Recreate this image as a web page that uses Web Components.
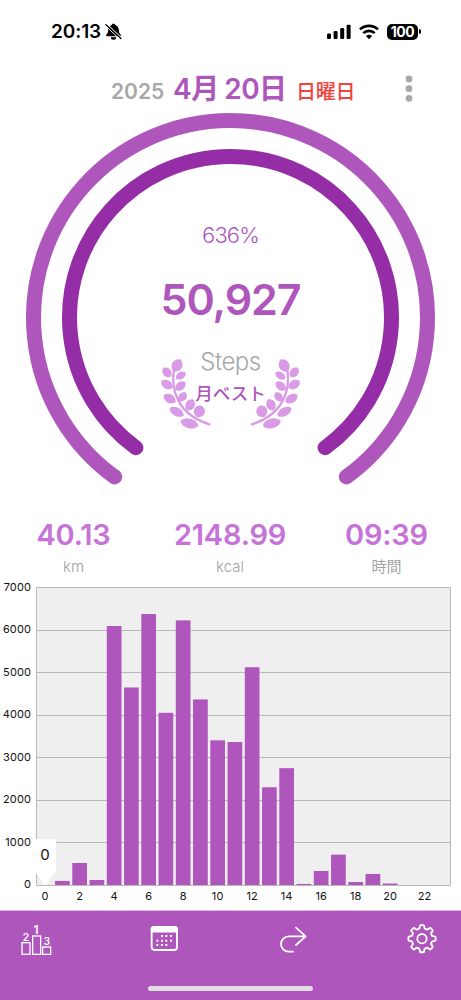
<!DOCTYPE html>
<html lang="ja">
<head>
<meta charset="utf-8">
<title>Steps</title>
<style>
  body {
    margin: 0;
    background: #fff;
    font-family: Inter, "Noto Sans CJK JP", sans-serif;
    --main: #ae56bc;
    --dark: #952da6;
    --light: #c672d8;
    --gray: #a8a8a8;
  }
</style>
</head>
<body>
<step-app></step-app>

<template id="step-app">
  <style>
    :host { display: flex; flex-direction: column; width: 461px; height: 1000px; overflow: hidden; }
    .stats { display: flex; height: 88px; margin-top: 1px; }
    .stats stat-item { flex: 0 0 auto; }
  </style>
  <status-bar time="20:13" battery="100"></status-bar>
  <date-header>
    <span slot="year">2025</span>
    <span slot="date">4月 20日</span>
    <span slot="weekday">日曜日</span>
  </date-header>
  <step-gauge>
    <span slot="percent">636%</span>
    <span slot="steps">50,927</span>
    <span slot="unit">Steps</span>
    <laurel-badge slot="badge">月ベスト</laurel-badge>
  </step-gauge>
  <div class="stats">
    <stat-item style="width:147px" value="40.13">km</stat-item>
    <stat-item style="width:166px" value="2148.99">kcal</stat-item>
    <stat-item style="width:147px" value="09:39">時間</stat-item>
  </div>
  <bar-chart max="7000" selected="0"
    values="[0,95,518,118,6094,4648,6376,4052,6226,4366,3404,3364,5124,2300,2749,25,330,714,70,260,35,0,0,0]"></bar-chart>
  <tab-bar></tab-bar>
</template>

<template id="status-bar">
  <style>
    :host { display: flex; align-items: center; height: 62px; padding: 1px 40px 0 51px; box-sizing: border-box; color: #000; }
    .time { font-size: 19px; font-weight: 600; letter-spacing: -0.1px; line-height: 24px; }
    .bell { margin-left: 4px; }
    .right { display: flex; align-items: center; gap: 8px; margin-left: auto; }
    .battery { display: flex; align-items: center; gap: 1px; }
    .level {
      width: 31px; height: 16px; border-radius: 5px; background: #000; color: #fff;
      font-size: 14px; font-weight: 700; line-height: 16px; text-align: center; letter-spacing: -0.5px;
    }
    .nub { width: 2px; height: 5px; border-radius: 0 2px 2px 0; background: #000; }
  </style>
  <span class="time"></span>
  <svg class="bell" width="17" height="18" viewBox="0 0 17 18">
    <path d="M8.500 0.700c1.200 0 1.900.6 2.100 1.500 2.300.9 3.200 2.700 3.300 5.200.1 2.200.7 3.100 1.700 4 .5.5.4 1.800-.5 1.800H1.900c-.9 0-1-1.300-.5-1.800 1-.9 1.600-1.800 1.700-4 .1-2.500 1-4.300 3.300-5.200.2-.9.9-1.500 2.100-1.500z"/>
    <path d="M5.800 14.300h5.400a2.700 2.500 0 0 1-5.400 0z"/>
    <path d="M1.200 0.700 16.800 15" stroke="#fff" stroke-width="1.100"/>
    <path d="M0.900 1.700 15.900 15.600" stroke="#000" stroke-width="1.300" stroke-linecap="round"/>
    <path d="M0.300 2.700 14.900 16.300" stroke="#fff" stroke-width="0.900"/>
  </svg>
  <div class="right">
    <svg width="24" height="16" viewBox="0 0 24 16">
      <rect x="0" y="9.500" width="4" height="5.500" rx="1.200"/>
      <rect x="6.600" y="7" width="4" height="8" rx="1.200"/>
      <rect x="13.200" y="4" width="4" height="11" rx="1.200"/>
      <rect x="19.600" y="0.800" width="4" height="14.200" rx="1.200"/>
    </svg>
    <svg width="20" height="16" viewBox="0 0 20 16" fill="none" stroke="#000" stroke-width="2.700">
      <path d="M1 5.400a13 13 0 0 1 18 0"/>
      <path d="M4.300 9.100a8.200 8.200 0 0 1 11.400 0"/>
      <path d="M10 15.200 6.900 12.100a4.500 4.500 0 0 1 6.200 0z" fill="#000" stroke="none"/>
    </svg>
    <div class="battery"><div class="level"></div><div class="nub"></div></div>
  </div>
</template>

<template id="date-header">
  <style>
    :host { display: flex; align-items: baseline; height: 50px; padding: 9px 0 0 111px; box-sizing: border-box; white-space: nowrap; line-height: 36px; }
    .year { width: 62px; color: var(--gray); font-size: 21px; font-weight: 600; }
    .date { width: 123px; color: var(--main); font-size: 28px; font-weight: 600; letter-spacing: -0.5px; word-spacing: -1px; }
    .weekday { width: 109px; color: #f0443c; font-size: 20px; font-weight: 500; letter-spacing: -0.3px; }
    svg { align-self: flex-start; margin-top: 4px; fill: var(--gray); }
  </style>
  <div class="year"><slot name="year"></slot></div>
  <div class="date"><slot name="date"></slot></div>
  <div class="weekday"><slot name="weekday"></slot></div>
  <svg width="8" height="28" viewBox="0 0 8 28">
    <circle cx="4" cy="4" r="3.400"/><circle cx="4" cy="13.700" r="3.400"/><circle cx="4" cy="23.300" r="3.400"/>
  </svg>
</template>

<template id="step-gauge">
  <style>
    /* arcs and labels share a single grid cell */
    :host { display: grid; height: 400px; }
    svg, .labels { grid-area: 1 / 1; }
    .labels { display: flex; flex-direction: column; align-items: center; white-space: nowrap; }
    .percent { margin-top: 109px; height: 28px; line-height: 28px; font-size: 22px; font-weight: 350; color: var(--main); letter-spacing: -0.9px; }
    .steps { margin-top: 22px; height: 56px; line-height: 56px; font-size: 43px; font-weight: 600; color: var(--main); letter-spacing: -1.1px; }
    .unit { margin-top: 20px; height: 30px; line-height: 30px; font-size: 24px; font-weight: 350; color: var(--gray); letter-spacing: -0.5px; }
    .badge { margin-top: -18px; }
  </style>
  <svg width="461" height="400" viewBox="0 112 461 400" fill="none" stroke-width="15" stroke-linecap="round">
    <path d="M114.700 476.900A197 197 0 1 1 346.300 476.900" stroke="var(--main)"/>
    <path d="M135.900 447.700A161 161 0 1 1 325.100 447.700" stroke="var(--dark)"/>
  </svg>
  <div class="labels">
    <div class="percent"><slot name="percent"></slot></div>
    <div class="steps"><slot name="steps"></slot></div>
    <div class="unit"><slot name="unit"></slot></div>
    <div class="badge"><slot name="badge"></slot></div>
  </div>
</template>

<template id="laurel-badge">
  <style>
    :host { display: grid; width: 140px; height: 70px; }
    svg, .text { grid-area: 1 / 1; }
    .text { padding-top: 23px; line-height: 24px; text-align: center; font-size: 17.5px; font-weight: 500; color: var(--main); }
  </style>
  <svg width="140" height="70" viewBox="63 448 420 210" fill="#d99ae6"></svg>
  <div class="text"><slot></slot></div>
</template>

<template id="stat-item">
  <style>
    :host { display: flex; flex-direction: column; align-items: center; }
    .value { margin-top: 4px; height: 36px; line-height: 36px; font-size: 29px; font-weight: 600; color: var(--light); letter-spacing: -0.2px; }
    .label { margin-top: 4px; height: 20px; line-height: 20px; font-size: 15px; font-weight: 350; color: #a0a0a0; }
  </style>
  <div class="value"></div>
  <div class="label"><slot></slot></div>
</template>

<template id="bar-chart">
  <style>
    :host { display: block; height: 330px; margin-top: -21px; }
    svg { display: block; }
    text { font-size: 11px; fill: #111; letter-spacing: 0.1px; }
    .y { text-anchor: end; }
    .x { text-anchor: middle; }
    .tip { font-size: 15px; text-anchor: middle; }
  </style>
  <svg width="461" height="330" viewBox="0 580 461 330"></svg>
</template>

<template id="tab-bar">
  <style>
    :host { display: flex; flex-direction: column; align-items: center; height: 90px; flex: none; background: var(--main); border-top: 1px solid #dfbde5; box-sizing: border-box; }
    nav { display: flex; justify-content: space-between; width: 100%; box-sizing: border-box; padding: 13px 23px 0 20px; height: 75px; }
    svg { width: 32px; height: 32px; fill: none; stroke: #fff; stroke-width: 5.500; overflow: visible; }
    text { fill: #fff; stroke: none; font-size: 31px; font-weight: 600; text-anchor: middle; }
    .podium { stroke-width: 4; }
    .home { width: 165px; height: 5px; border-radius: 3px; background: #e2dfe3; }
  </style>
  <nav>
    <svg class="podium" viewBox="0 0 96 96">
      <rect x="6" y="56" width="24" height="35"/>
      <rect x="38" y="36" width="24" height="55"/>
      <rect x="68" y="69" width="24" height="22"/>
      <text x="18" y="50">2</text><text x="48" y="29" style="font-size:36px">1</text><text x="80" y="62">3</text>
    </svg>
    <svg viewBox="0 0 96 96">
      <rect x="8" y="9" width="76" height="69" rx="8"/>
      <path d="M8 23V15q0-6 7-6h62q7 0 7 6v8z" fill="#fff"/>
      <path d="M36 33h6v6h-6zM49 33h6v6h-6zM63 33h6v6h-6zM22 47h6v6h-6zM36 47h6v6h-6zM49 47h6v6h-6zM63 47h6v6h-6zM22 60h6v6h-6zM36 60h6v6h-6zM49 60h6v6h-6z" fill="#fff" stroke="none"/>
    </svg>
    <svg viewBox="0 0 96 96" stroke-linecap="round" stroke-linejoin="round">
      <path d="M85 37H35a23 23 0 0 0 0 46H48M57 11 86 37 57 63"/>
    </svg>
    <svg viewBox="0 0 96 96" stroke-linejoin="round">
      <path class="gear"/>
      <circle cx="48" cy="44" r="14"/>
    </svg>
  </nav>
  <div class="home"></div>
</template>

<script>
  (() => {
    class BaseElement extends HTMLElement {
      constructor() {
        super();
        const template = document.getElementById(this.localName);
        this.attachShadow({mode: 'open'});
        this.shadowRoot.appendChild(document.importNode(template.content, true));
      }

      find(selector) {
        return this.shadowRoot.querySelector(selector);
      }
    }

    class StepApp extends BaseElement {}
    class DateHeader extends BaseElement {}
    class StepGauge extends BaseElement {}

    class StatusBar extends BaseElement {
      connectedCallback() {
        this.find('.time').textContent = this.getAttribute('time');
        this.find('.level').textContent = this.getAttribute('battery');
      }
    }

    class StatItem extends BaseElement {
      connectedCallback() {
        this.find('.value').textContent = this.getAttribute('value');
      }
    }

    // leaves of the left branch: tip x, y, base x, y, width
    const LEAVES = [
      [121, 449, 101, 486, 31],
      [70, 474, 92, 502, 25],
      [64, 514, 98, 535, 25],
      [71, 556, 107, 578, 26],
      [89, 595, 131, 618, 25],
      [121, 634, 175, 648, 29],
      [137, 488, 108, 507, 21],
      [136, 517, 107, 541, 24],
      [137, 548, 119, 574, 23],
      [159, 569, 142, 602, 27],
      [186, 588, 170, 622, 33],
    ];

    class LaurelBadge extends BaseElement {
      connectedCallback() {
        const leaves = LEAVES.map(leaf => this.leafPath(...leaf)).join('');
        const branch = `<path d="${leaves}"/>
          <path d="M102 478C92 540 112 614 208 644" fill="none" stroke="#d99ae6" stroke-width="7" stroke-linecap="round"/>`;

        this.find('svg').innerHTML = `<g>${branch}</g><g transform="translate(543.500 0) scale(-1 1)">${branch}</g>`;
      }

      leafPath(x1, y1, x2, y2, width) {
        const length = Math.hypot(x2 - x1, y2 - y1);
        const nx = -(y2 - y1) / length * width * 0.68;
        const ny = (x2 - x1) / length * width * 0.68;
        const at = (t, side) => `${x1 + (x2 - x1) * t + nx * side} ${y1 + (y2 - y1) * t + ny * side}`;

        return `M${x1} ${y1}C${at(0.2, 1)} ${at(0.8, 1)} ${x2} ${y2}C${at(0.8, -1)} ${at(0.2, -1)} ${x1} ${y1}z`;
      }
    }

    class BarChart extends BaseElement {
      connectedCallback() {
        this.values = JSON.parse(this.getAttribute('values'));
        this.max = +this.getAttribute('max');
        this.left = 36.5;
        this.right = 450.5;
        this.top = 587.5;
        this.bottom = 885;
        this.slotWidth = (this.right - this.left) / this.values.length;
        this.find('svg').innerHTML = this.renderGrid() + this.renderBars() + this.renderTip();
      }

      y(value) {
        return this.bottom - value / this.max * (this.bottom - this.top);
      }

      renderGrid() {
        let out = `<rect x="${this.left}" y="${this.top}" width="${this.right - this.left}" height="${this.bottom - this.top}" fill="#efefef"/>`;

        for (let v = 0; v <= this.max; v += 1000) {
          const y = Math.floor(this.y(v)) + 0.5;
          out += `<path d="M${this.left} ${y}H${this.right}" stroke="#b9b9b9"/>`;
          out += `<text class="y" x="31" y="${this.y(v) + 3.4}">${v}</text>`;
        }

        return out + `<path d="M${this.left} ${this.top}V${this.bottom}M${this.right} ${this.top}V${this.bottom}" stroke="#b9b9b9"/>`;
      }

      renderBars() {
        return this.values.map((value, i) => {
          const x = this.left + this.slotWidth * i;
          const label = i % 2 ? '' : `<text class="x" x="${x + this.slotWidth / 2}" y="900">${i}</text>`;
          const bar = value ? `<rect x="${x + 1.3}" y="${this.y(value)}" width="14.7" height="${this.bottom - this.y(value)}" fill="var(--main)"/>` : '';

          return bar + label;
        }).join('');
      }

      renderTip() {
        const i = +this.getAttribute('selected');
        const x = this.left + this.slotWidth * (i + 0.5);
        const y = this.y(this.values[i]);

        return `<path d="M${x - 11} ${y - 46}h22v34h-2l-8 12h-2l-8-12h-2z" fill="#fff"/>
          <text class="tip" x="${x}" y="${y - 24.600}">${this.values[i]}</text>`;
      }
    }

    class TabBar extends BaseElement {
      connectedCallback() {
        this.find('.gear').setAttribute('d', this.gearPath(48, 44, 8));
      }

      gearPath(cx, cy, teeth) {
        const step = 360 / teeth;
        const point = (angle, r) => {
          const rad = (angle - 90) * Math.PI / 180;
          return `${cx + r * Math.cos(rad)} ${cy + r * Math.sin(rad)}`;
        };
        let d = `M${point(-6, 41)}`;

        for (let i = 0; i < teeth; i++) {
          const a = i * step;
          d += `L${point(a + 6, 41)}Q${point(a + 10, 41)} ${point(a + 10.5, 37)}`;
          d += `Q${point(a + 13, 30)} ${point(a + step / 2, 31)}`;
          d += `Q${point(a + step - 13, 30)} ${point(a + step - 10.5, 37)}`;
          d += `Q${point(a + step - 10, 41)} ${point(a + step - 6, 41)}`;
        }

        return d + 'z';
      }
    }

    window.customElements.define('step-app', StepApp);
    window.customElements.define('status-bar', StatusBar);
    window.customElements.define('date-header', DateHeader);
    window.customElements.define('step-gauge', StepGauge);
    window.customElements.define('laurel-badge', LaurelBadge);
    window.customElements.define('stat-item', StatItem);
    window.customElements.define('bar-chart', BarChart);
    window.customElements.define('tab-bar', TabBar);
  })();
</script>
</body>
</html>
